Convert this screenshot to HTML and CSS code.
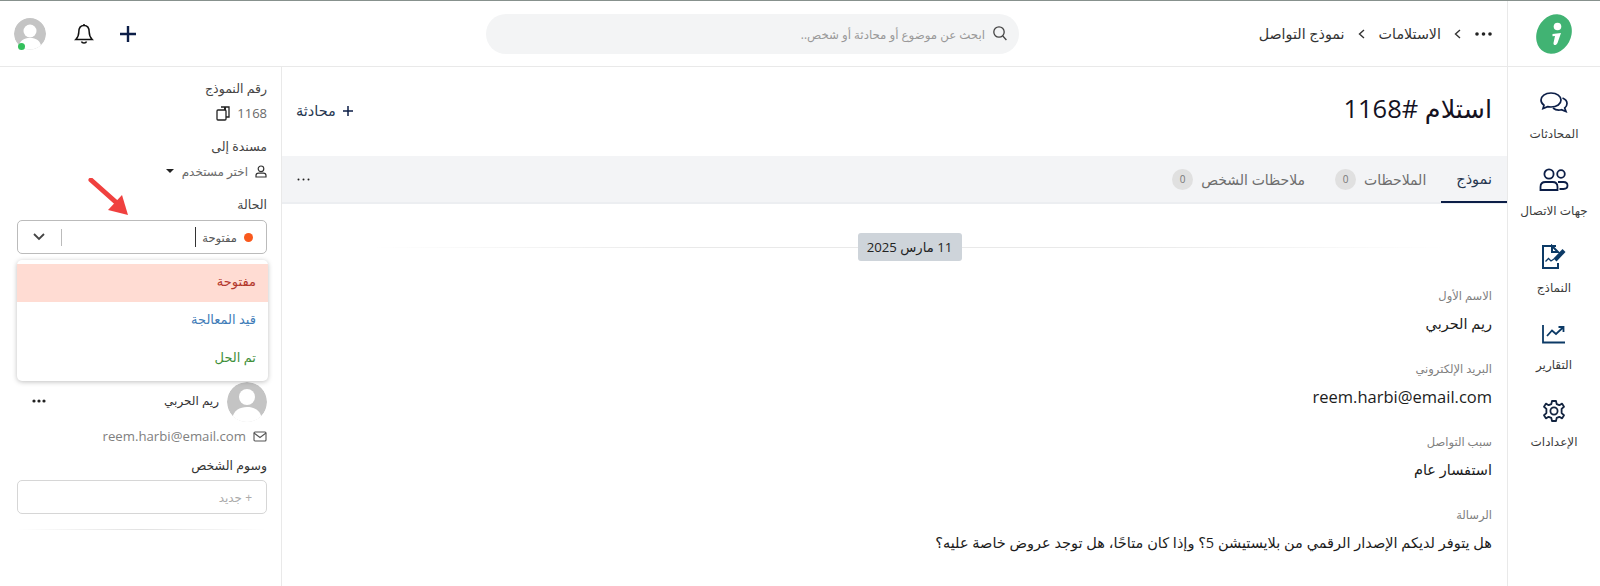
FILE: index.html
```html
<!DOCTYPE html>
<html lang="ar" dir="rtl">
<head>
  <meta charset="UTF-8" />
  <title>استلام #1168</title>
  <link rel="stylesheet" href="styles.css">
</head>
<body>
  <!-- Top bar -->
  <header class="topbar">
    <div class="logo-cell">
      <svg width="40" height="42" viewBox="0 0 40 42">
        <ellipse cx="20" cy="21" rx="17" ry="20.5" transform="rotate(28 20 21)" fill="#41b373"/>
        <circle cx="23.5" cy="13.5" r="3.8" fill="#fff"/>
        <path d="M18.5 21L27 20L23.5 30C22.5 32.5 19.2 33 19.5 30L21 23L18.5 23.3Z" fill="#fff"/>
      </svg>
    </div>
    <nav class="crumbs">
      <svg class="dots" width="17" height="4" viewBox="0 0 17 4"><circle cx="2" cy="2" r="1.8"/><circle cx="8.5" cy="2" r="1.8"/><circle cx="15" cy="2" r="1.8"/></svg>
      <svg class="chev" width="12" height="12" viewBox="0 0 12 12"><path d="M8 2L3.5 6L8 10" /></svg>
      <span>الاستلامات</span>
      <svg class="chev" width="12" height="12" viewBox="0 0 12 12"><path d="M8 2L3.5 6L8 10" /></svg>
      <span>نموذج التواصل</span>
    </nav>
    <div class="search">
      <svg width="14" height="15" viewBox="0 0 14 15" fill="none" stroke="#444" stroke-width="1.3"><circle cx="6" cy="6" r="5.2"/><path d="M9.8 10L13.4 14"/></svg>
      <span>ابحث عن موضوع أو محادثة أو شخص..</span>
    </div>
    <div class="top-actions">
      <svg width="20" height="20" viewBox="0 0 20 20" fill="none" stroke="#0c1e47" stroke-width="2.4"><path d="M10 2V18M2 10H18"/></svg>
      <svg class="bell" width="20" height="22" viewBox="0 0 20 22" fill="none" stroke="#111" stroke-width="1.5"><path d="M10 2.5C6 2.5 4.8 5.5 4.8 9C4.8 12.5 3.8 14.5 1.8 16.5H18.2C16.2 14.5 15.2 12.5 15.2 9C15.2 5.5 14 2.5 10 2.5Z"/><path d="M10 1V2.5M7.5 18.5C8 20.6 12 20.6 12.5 18.5"/></svg>
      <div class="avatar avatar-sm">
        <svg viewBox="0 0 32 32"><circle cx="16" cy="16" r="16" fill="#c4c4c4"/><circle cx="16" cy="13" r="6.5" fill="#fff"/><path d="M4 32C5 22 10 20 16 20C22 20 27 22 28 32Z" fill="#fff"/></svg>
        <i class="online"></i>
      </div>
    </div>
  </header>

  <div class="layout">
    <!-- Main navigation -->
    <aside class="sidenav">
      <a class="nav-item">
        <svg width="30" height="26" viewBox="0 0 30 26" fill="none" stroke="#0c1e47" stroke-width="1.7"><path d="M12 3C6 3 2 6.2 2 10C2 12.3 3.2 14 5 15.2L4 18.5L8.6 16.6C9.6 16.9 10.8 17 12 17C18 17 22 14 22 10C22 6.2 18 3 12 3Z"/><path d="M23.5 8C26.5 9.2 28 11.3 28 13.6C28 15.4 27.2 16.9 25.7 18L27 21.6L22.4 19.7C20 20.3 16.5 20 14 18"/></svg>
        <span>المحادثات</span>
      </a>
      <a class="nav-item">
        <svg width="30" height="26" viewBox="0 0 30 26" fill="none" stroke="#0c1e47" stroke-width="1.8"><circle cx="10" cy="7" r="4.6"/><circle cx="22" cy="7" r="3.8"/><path d="M1.5 23V20C1.5 17 3.5 15 6.5 15H13.5C16.5 15 18.5 17 18.5 20V23Z"/><path d="M19 15H24.5C27 15 28.5 16.6 28.5 18.6C28.5 20.6 27 22 24.5 22H20.5"/></svg>
        <span>جهات الاتصال</span>
      </a>
      <a class="nav-item">
        <svg width="28" height="26" viewBox="0 0 28 26" fill="none" stroke="#0c3a66" stroke-width="2"><path d="M16 2H3V24H18V19"/><path d="M12 2V8H18L12 2Z"/><path d="M5.5 17.5L8.5 14.5L11 17L14 15" stroke-width="1.3"/><path d="M15 16L24 6.5" stroke-width="4.2"/></svg>
        <span>النماذج</span>
      </a>
      <a class="nav-item">
        <svg width="26" height="26" viewBox="0 -3 26 26" fill="none" stroke="#0c3a66" stroke-width="1.8"><path d="M2 1V18.5H24"/><path d="M6 12L11 6.5L15 10L22 3.5M17.5 3H22.5V8"/></svg>
        <span>التقارير</span>
      </a>
      <a class="nav-item">
        <svg width="26" height="26" viewBox="-1 -1 26 26" fill="none" stroke="#12233f" stroke-width="1.8"><circle cx="12" cy="12" r="3.6"/><path d="M10 2H14L14.7 5.1L17.3 6.2L20.1 4.6L22 7.8L19.6 9.9V14.1L22 16.2L20.1 19.4L17.3 17.8L14.7 18.9L14 22H10L9.3 18.9L6.7 17.8L3.9 19.4L2 16.2L4.4 14.1V9.9L2 7.8L3.9 4.6L6.7 6.2L9.3 5.1Z" stroke-linejoin="round"/></svg>
        <span>الإعدادات</span>
      </a>
    </aside>

    <!-- Conversation content -->
    <main class="content">
      <div class="title-row">
        <h1>استلام #1168</h1>
        <a class="new-chat">
          <svg width="12" height="12" viewBox="0 0 12 12" stroke="#0c1e47" stroke-width="1.5"><path d="M6 1V11M1 6H11"/></svg>
          <span>محادثة</span>
        </a>
      </div>
      <div class="tabs">
        <a class="tab active">نموذج</a>
        <a class="tab">الملاحظات <b class="count">0</b></a>
        <a class="tab">ملاحظات الشخص <b class="count">0</b></a>
        <svg class="tab-more" width="13" height="3" viewBox="0 0 13 3"><circle cx="1.5" cy="1.5" r="1"/><circle cx="6.5" cy="1.5" r="1"/><circle cx="11.5" cy="1.5" r="1"/></svg>
      </div>
      <div class="date-line"><span class="date-pill">11 مارس 2025</span></div>
      <section class="fields">
        <div class="field">
          <label>الاسم الأول</label>
          <p>ريم الحربي</p>
        </div>
        <div class="field">
          <label>البريد الإلكتروني</label>
          <p class="latin">reem.harbi@email.com</p>
        </div>
        <div class="field">
          <label>سبب التواصل</label>
          <p>استفسار عام</p>
        </div>
        <div class="field">
          <label>الرسالة</label>
          <p>هل يتوفر لديكم الإصدار الرقمي من بلايستيشن 5؟ وإذا كان متاحًا، هل توجد عروض خاصة عليه؟</p>
        </div>
      </section>
    </main>

    <!-- Details panel -->
    <aside class="details">
      <div class="info-label">رقم النموذج</div>
      <div class="info-value">
        <span>1168</span>
        <svg width="14" height="15" viewBox="0 0 14 15" fill="none" stroke="#222" stroke-width="1.3"><path d="M5 1H13V11H10"/><rect x="1" y="4" width="9" height="10" rx="1"/><path d="M9 1V4" stroke-width="2"/></svg>
      </div>
      <div class="info-label assigned">مسندة إلى</div>
      <div class="info-value small">
        <svg width="12" height="13" viewBox="0 0 12 13" fill="none" stroke="#333" stroke-width="1.2"><circle cx="6" cy="3.8" r="2.8"/><path d="M1 12V10.5C1 9 2 8.2 3.5 8.2H8.5C10 8.2 11 9 11 10.5V12Z"/></svg>
        <span>اختر مستخدم</span>
        <i class="caret"></i>
      </div>
      <div class="info-label status-label">الحالة</div>
      <div class="status-box">
        <div class="status-select">
          <i class="status-dot"></i>
          <span>مفتوحة</span>
          <i class="cursor"></i>
          <i class="sep"></i>
          <svg width="14" height="10" viewBox="0 0 14 10" fill="none" stroke="#444" stroke-width="1.8"><path d="M2 2L7 7L12 2"/></svg>
        </div>
        <ul class="status-menu">
          <li class="opt-open">مفتوحة</li>
          <li class="opt-progress">قيد المعالجة</li>
          <li class="opt-done">تم الحل</li>
        </ul>
      </div>
      <div class="person">
        <svg class="person-pic" viewBox="0 0 40 40"><circle cx="20" cy="20" r="20" fill="#c4c4c4"/><circle cx="20" cy="15" r="8" fill="#fff"/><path d="M5 38C6 28 13 25 20 25C27 25 34 28 35 38C26 42 14 42 5 38Z" fill="#fff"/></svg>
        <span class="person-name">ريم الحربي</span>
        <svg class="person-more" width="14" height="4" viewBox="0 0 14 4"><circle cx="2" cy="2" r="1.6"/><circle cx="7" cy="2" r="1.6"/><circle cx="12" cy="2" r="1.6"/></svg>
      </div>
      <div class="person-mail">
        <svg width="14" height="11" viewBox="0 0 14 11" fill="none" stroke="#555" stroke-width="1.1"><rect x="1" y="1" width="12" height="9" rx="1"/><path d="M1 2L7 6.5L13 2"/></svg>
        <span>reem.harbi@email.com</span>
      </div>
      <div class="info-label tags-label">وسوم الشخص</div>
      <div class="tags-box">+ جديد</div>
      <div class="fade-line"></div>
    </aside>
  </div>

  <!-- Annotation arrow on the screenshot -->
  <svg class="annot-arrow" width="44" height="40" viewBox="0 0 44 40">
    <path d="M3 2L30 26" stroke="#f0413f" stroke-width="5" stroke-linecap="round"/>
    <path d="M40 37L20 32L34 17Z" fill="#f0413f"/>
  </svg>
</body>
</html>
```

FILE: styles.css
```css
* {
  box-sizing: border-box;
}

html, body {
  height: 100%;
}

body {
  margin: 0;
  overflow: hidden;
  border-top: 1px solid #87918d;
  background: #fff;
  color: #222;
  font-family: "Open Sans", "Noto Sans", "DejaVu Sans", sans-serif;
  font-size: 13px;
  position: relative;
}

p, h1, ul {
  margin: 0;
  padding: 0;
}

/* top bar */
.topbar {
  display: flex;
  align-items: center;
  height: 66px;
  border-bottom: 1px solid #e9e9e9;
}

.logo-cell {
  width: 93px;
  height: 100%;
  display: flex;
  align-items: center;
  justify-content: center;
  border-left: 1px solid #e9e9e9;
  flex: none;
}

.crumbs {
  display: flex;
  align-items: center;
  gap: 11px;
  width: 488px;
  padding-right: 15px;
  font-size: 14.3px;
  color: #333;
  flex: none;
}

.dots {
  fill: #222;
}

.chev {
  fill: none;
  stroke: #333;
  stroke-width: 1.4;
}

.search {
  width: 533px;
  height: 40px;
  background: #f3f4f5;
  border-radius: 20px;
  display: flex;
  align-items: center;
  gap: 8px;
  padding-right: 12px;
  font-size: 11.8px;
  color: #999;
  flex: none;
}

.top-actions {
  flex: 1;
  display: flex;
  align-items: center;
  gap: 24px;
  padding-right: 348px;
}

.avatar {
  position: relative;
  margin-right: 4px;
}

.avatar-sm {
  width: 32px;
  height: 32px;
}

.avatar-sm svg {
  display: block;
  clip-path: circle(50%);
}

.online {
  position: absolute;
  left: 4px;
  bottom: 0;
  width: 7px;
  height: 7px;
  border-radius: 50%;
  background: #34c05c;
}

/* page columns */
.layout {
  display: flex;
  height: 519px;
}

.sidenav {
  width: 93px;
  flex: none;
  border-left: 1px solid #e9e9e9;
  padding-top: 23px;
  display: flex;
  flex-direction: column;
  align-items: center;
}

.nav-item {
  height: 77px;
  display: flex;
  flex-direction: column;
  align-items: center;
  color: #3c3c3c;
  font-size: 12px;
  gap: 9px;
}

.nav-item svg {
  flex: none;
}

/* main */
.content {
  flex: 1;
  border-left: 1px solid #e9e9e9;
  min-width: 0;
}

.title-row {
  height: 89px;
  display: flex;
  align-items: center;
  justify-content: space-between;
  padding: 0 15px 8px 14px;
}

h1 {
  font-size: 25.5px;
  font-weight: 400;
  color: #15121f;
}

.new-chat {
  display: flex;
  align-items: center;
  gap: 6px;
  color: #26364f;
  font-size: 14.5px;
  margin-top: 6px;
}

.tabs {
  height: 48px;
  background: #f3f4f6;
  border-bottom: 2px solid #eceef1;
  display: flex;
  align-items: center;
  font-size: 14px;
  color: #6d6d6d;
  position: relative;
}

.tab {
  height: 48px;
  display: flex;
  align-items: center;
  gap: 8px;
  padding: 0 15px;
}

.tab.active {
  color: #26364f;
  font-size: 14.5px;
  border-bottom: 2px solid #0c1e47;
}

.count {
  width: 21px;
  height: 21px;
  border-radius: 50%;
  background: #e0e0e0;
  color: #777;
  font-weight: 400;
  font-size: 10px;
  display: flex;
  align-items: center;
  justify-content: center;
}

.tab-more {
  margin-right: auto;
  margin-left: 15px;
  fill: #222;
}

.date-line {
  height: 28px;
  margin: 29px 60px 0 90px;
  background: linear-gradient(to left, transparent, #e9e9e9 30%, #e9e9e9 70%, transparent) center / 100% 1px no-repeat;
  display: flex;
  justify-content: center;
}

.date-pill {
  width: 104px;
  background: #ced4da;
  border-radius: 3px;
  font-size: 13.2px;
  color: #222;
  display: flex;
  align-items: center;
  justify-content: center;
}

.fields {
  padding: 25px 15px 0;
}

.field {
  height: 73px;
}

.field label {
  display: block;
  font-size: 11.5px;
  color: #808080;
  height: 26px;
  line-height: 20px;
}

.field p {
  font-size: 14.5px;
  color: #1c1c1c;
  line-height: 24px;
}

.field p.latin {
  font-size: 16.5px;
}

/* details panel */
.details {
  width: 281px;
  flex: none;
  padding: 12px 14px 0 17px;
}

.info-label {
  font-size: 12.5px;
  color: #444;
  line-height: 20px;
}

.info-value {
  display: flex;
  align-items: center;
  gap: 7px;
  margin-top: 4px;
  height: 20px;
  font-size: 13px;
  color: #6a6a6a;
}

.info-value.small {
  font-size: 12px;
}

.assigned {
  margin-top: 14px;
}

.caret {
  width: 0;
  height: 0;
  border: 4px solid transparent;
  border-top: 4px solid #222;
  border-bottom: 0;
  margin-right: 1px;
}

.status-label {
  margin-top: 14px;
}

.status-box {
  position: relative;
  margin-top: 5px;
}

.status-select {
  height: 34px;
  border: 1px solid #bbb;
  border-radius: 5px;
  display: flex;
  align-items: center;
  padding: 0 13px 0 14px;
  font-size: 11.5px;
  color: #555;
}

.status-dot {
  width: 9px;
  height: 9px;
  border-radius: 50%;
  background: #f9591d;
  margin-left: 7px;
}

.cursor {
  width: 1px;
  height: 20px;
  background: #333;
  margin-right: 6px;
}

.sep {
  width: 1px;
  height: 17px;
  background: #bbb;
  margin-right: auto;
}

.status-select svg {
  margin-right: 15px;
}

.status-menu {
  position: absolute;
  top: 40px;
  right: -1px;
  left: 0;
  height: 121px;
  background: #fff;
  border-radius: 5px;
  box-shadow: 0 1px 5px rgba(0, 0, 0, 0.25);
  list-style: none;
  padding-top: 4px;
  font-size: 13px;
  z-index: 2;
}

.status-menu li {
  height: 38px;
  display: flex;
  align-items: center;
  padding: 0 12px 5px 0;
}

.opt-open {
  background: #ffdcd3;
  color: #b3372c;
}

.opt-progress {
  color: #3f7cb8;
}

.opt-done {
  color: #3f8f3a;
}

.person {
  display: flex;
  align-items: center;
  margin-top: 128px;
  height: 40px;
}

.person-pic {
  width: 40px;
  height: 40px;
  flex: none;
  margin-left: 8px;
  clip-path: circle(50%);
}

.person-name {
  font-size: 12px;
  color: #333;
  margin-bottom: 4px;
}

.person-more {
  margin: 0 auto 2px 15px;
  fill: #222;
}

.person-mail {
  display: flex;
  align-items: center;
  gap: 7px;
  margin-top: 4px;
  font-size: 13.2px;
  color: #808080;
  height: 20px;
}

.tags-label {
  margin-top: 10px;
  color: #333;
}

.tags-box {
  height: 34px;
  margin-top: 4px;
  border: 1px solid #d6d6d6;
  border-radius: 5px;
  padding-right: 14px;
  display: flex;
  align-items: center;
  font-size: 12px;
  color: #aaa;
}

.fade-line {
  height: 1px;
  margin-top: 15px;
  background: linear-gradient(to left, transparent, #e2e2e2 50%, transparent);
}

/* red arrow drawn over the page */
.annot-arrow {
  position: absolute;
  left: 88px;
  top: 177px;
}
```
